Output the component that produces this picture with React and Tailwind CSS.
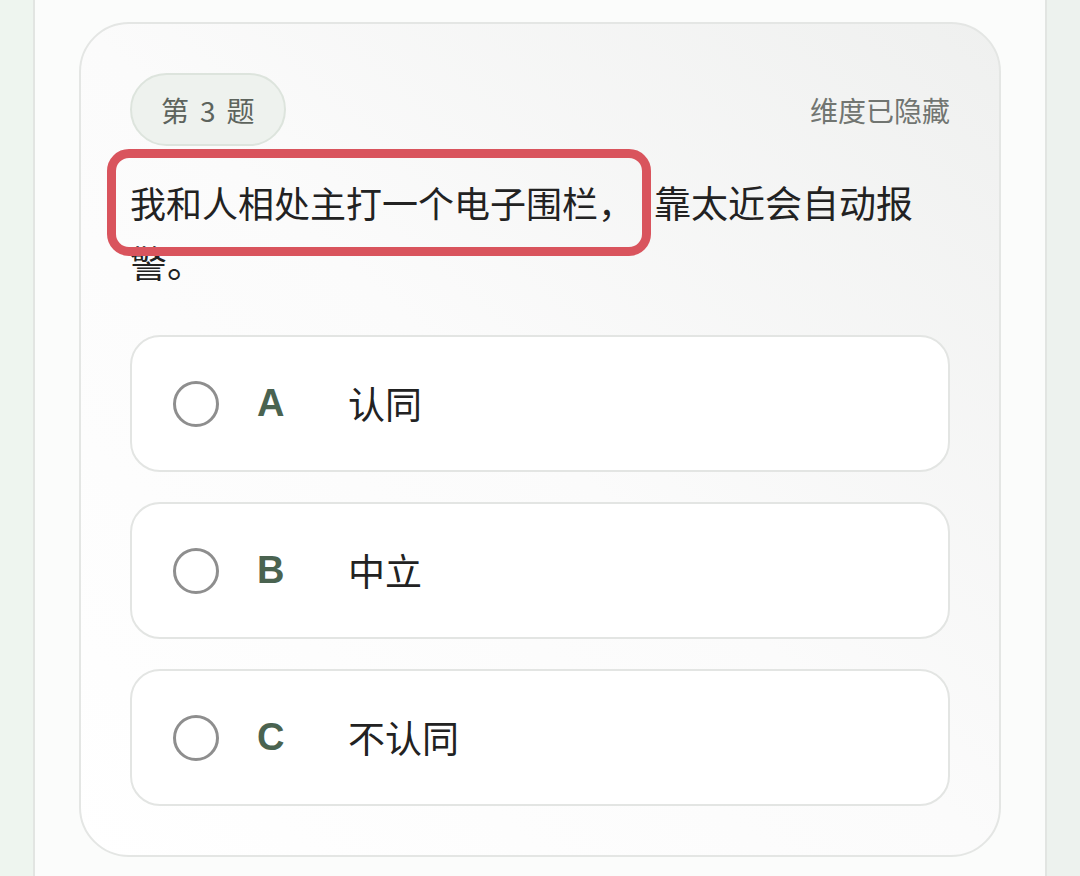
import React from "react";

const options = [
  { key: "A", label: "认同" },
  { key: "B", label: "中立" },
  { key: "C", label: "不认同" },
];

const cjk = "font-['Noto_Sans_CJK_SC','Noto_Sans',sans-serif]";

export default function App() {
  return (
    <div className={`flex h-[876px] w-[1080px] overflow-hidden bg-[#eef4ef] ${cjk}`}>
      <div className="w-[33px] shrink-0 bg-[#eef5ef]" />
      <main className="flex-1 border-x-2 border-[#e2e5e2] bg-[#fbfcfb] px-[44px] pt-[22px]">
        <section className="rounded-[50px] border-2 border-[#e4e6e4] bg-linear-to-bl from-[#eff0ef] via-[#fbfbfb] to-white px-[49px] pb-[49px] pt-[49px]">
          <div className="flex items-center justify-between">
            <span className="flex h-[73px] items-center gap-[11px] rounded-full border-2 border-[#dde4dd] bg-[#eef2ee] px-[29px] text-[28px] text-[#5d645d]">
              <span>第</span>
              <span>3</span>
              <span>题</span>
            </span>
            <span className="text-[28px] text-[#717571]">维度已隐藏</span>
          </div>

          <div className="relative mt-[26px] text-[36px] leading-[60px] text-[#222]">
            <p>
              <span>我和人相处主打一个电子围栏，</span>
              <span className="ml-[20px] text-[37px]">靠太近会自动报警。</span>
            </p>
            <div className="pointer-events-none absolute left-[-23px] top-[-23px] h-[107px] w-[544px] rounded-[22px] border-[9px] border-[#d9545d]" />
          </div>

          <div className="mt-[43px] flex flex-col gap-[30px]">
            {options.map((o) => (
              <div
                key={o.key}
                className="flex h-[137px] items-center rounded-[30px] border-2 border-[#e3e5e3] bg-white pl-[41px]"
              >
                <span className="h-[46px] w-[46px] shrink-0 rounded-full border-[3px] border-[#8e8e8e]" />
                <span className="ml-[38px] w-[91px] font-['Liberation_Sans',Arial,sans-serif] text-[38px] font-bold text-[#4a6350]">
                  {o.key}
                </span>
                <span className="text-[37px] text-[#222]">{o.label}</span>
              </div>
            ))}
          </div>
        </section>
      </main>
      <div className="w-[33px] shrink-0 bg-[#edf2ee]" />
    </div>
  );
}
